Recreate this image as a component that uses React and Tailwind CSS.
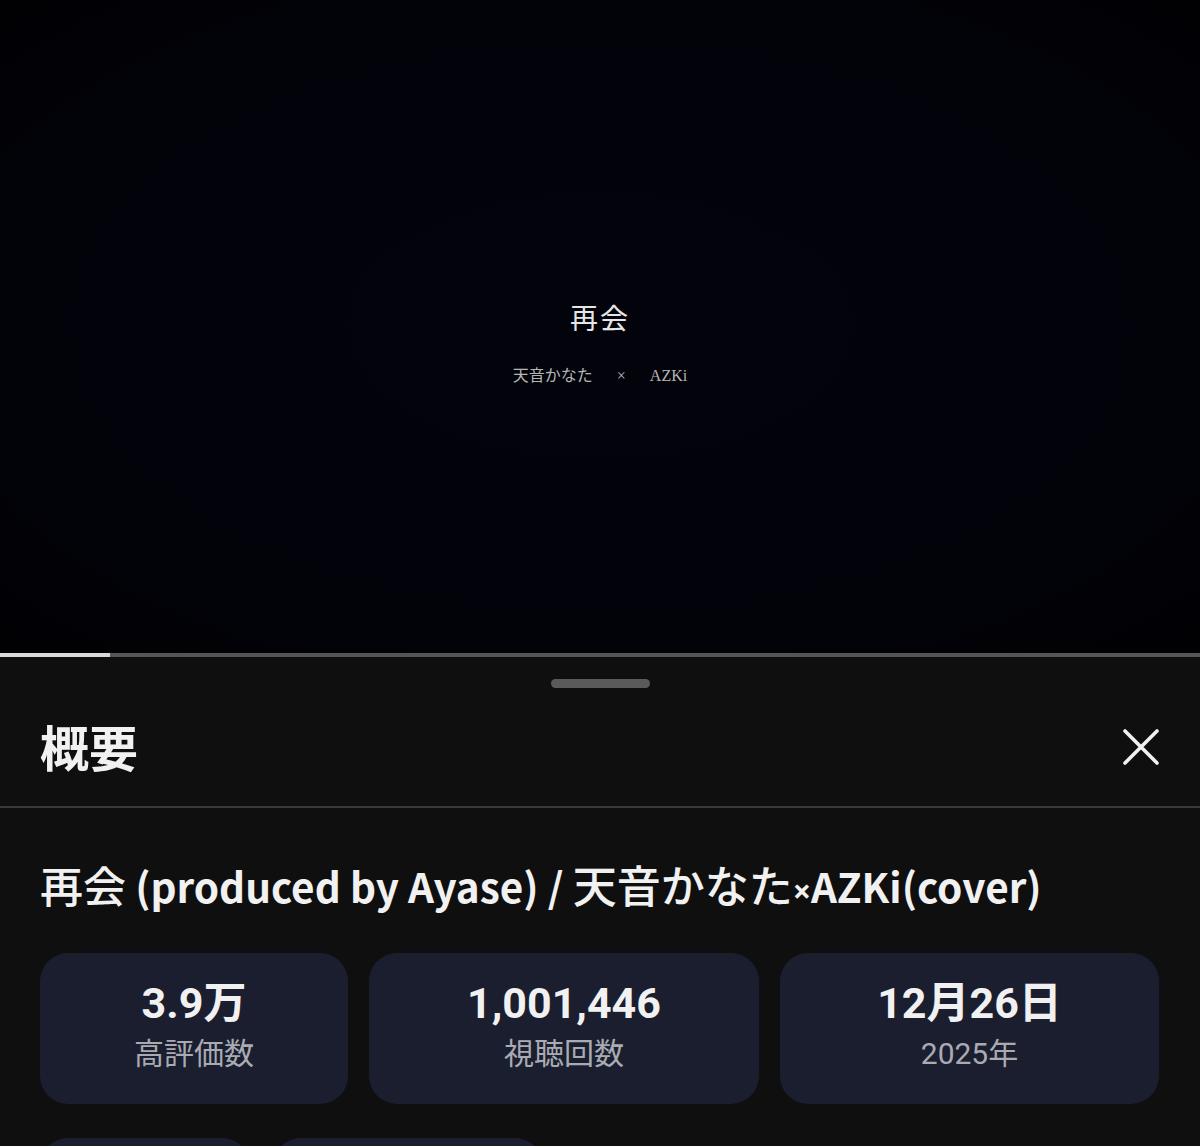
import React from 'react';

const stats = [
  { value: '3.9万', label: '高評価数', width: 'w-[308px]' },
  { value: '1,001,446', label: '視聴回数', width: 'w-[390px]' },
  { value: '12月26日', label: '2025年', width: 'w-[379px]' },
];

const App = () => {
  return (
    <div className="w-[1200px] h-[1146px] overflow-hidden bg-[#0f0f0f] flex flex-col font-['Roboto','Noto_Sans_CJK_JP',sans-serif]">
      {/* video */}
      <div className="h-[653px] shrink-0 bg-[radial-gradient(ellipse_at_center,#03040b_0%,#02030a_60%,#010104_100%)] flex flex-col items-center justify-center pt-[36px]">
        <div className="text-[28px] leading-none text-[#e6e6e6] font-['Liberation_Serif','Noto_Sans_CJK_JP',serif] tracking-[2px]">再会</div>
        <div className="mt-[34px] text-[16px] leading-none text-[#b5b5b5] font-['Liberation_Serif','Noto_Sans_CJK_JP',serif] flex items-center gap-[24px]">
          <span>天音かなた</span>
          <span>×</span>
          <span>AZKi</span>
        </div>
      </div>

      {/* progress */}
      <div className="h-[4px] shrink-0 bg-[#555555] flex">
        <div className="w-[110px] h-full bg-[#d8d8d8]" />
      </div>

      {/* panel */}
      <div className="flex flex-col">
        <div className="flex justify-center pt-[22px]">
          <div className="w-[99px] h-[9px] rounded-full bg-[#5a5a5a]" />
        </div>
        <div className="h-[118px] flex items-center justify-between px-[40px] pb-[4px]">
          <div className="text-[49px] leading-none font-bold text-[#f1f1f1] font-['Noto_Sans_CJK_JP',sans-serif]">概要</div>
          <div className="mr-[1px] mt-[4px] w-[36px] h-[36px]">
            <svg width="36" height="36" viewBox="0 0 36 36" fill="none">
              <path d="M2 2L34 34M34 2L2 34" stroke="#f1f1f1" strokeWidth="3.6" strokeLinecap="round" />
            </svg>
          </div>
        </div>
        <div className="h-[2px] bg-[#3a3a3a]" />

        <div className="px-[40px] pt-[54px]">
          <h1 className="h-[48px] text-[40.5px] leading-[48px] font-bold text-[#f1f1f1] font-['Noto_Sans_CJK_JP',sans-serif] whitespace-nowrap">
            <span className="text-[43px] leading-none font-medium">再会</span> (produced by Ayase) / <span className="text-[44px] leading-none font-medium">天音かなた</span><span className="font-['Noto_Sans',sans-serif] text-[32px] leading-none">×</span>AZKi(cover)
          </h1>

          <div className="mt-[43px] flex gap-[21px]">
            {stats.map((s) => (
              <div
                key={s.label}
                className={`${s.width} h-[151px] rounded-[28px] bg-[#1b1e2f] flex flex-col items-center pt-[26px]`}
              >
                <div className="text-[43px] leading-[48px] font-bold text-[#f1f1f1]">{s.value}</div>
                <div className="mt-[8px] text-[30px] leading-[38px] text-[#a9abb3]">{s.label}</div>
              </div>
            ))}
          </div>

          <div className="mt-[34px] flex gap-[23px]">
            <div className="w-[210px] h-[120px] rounded-[28px] bg-[#1b1e2f]" />
            <div className="w-[270px] h-[120px] rounded-[28px] bg-[#1b1e2f]" />
          </div>
        </div>
      </div>
    </div>
  );
};

export default App;
